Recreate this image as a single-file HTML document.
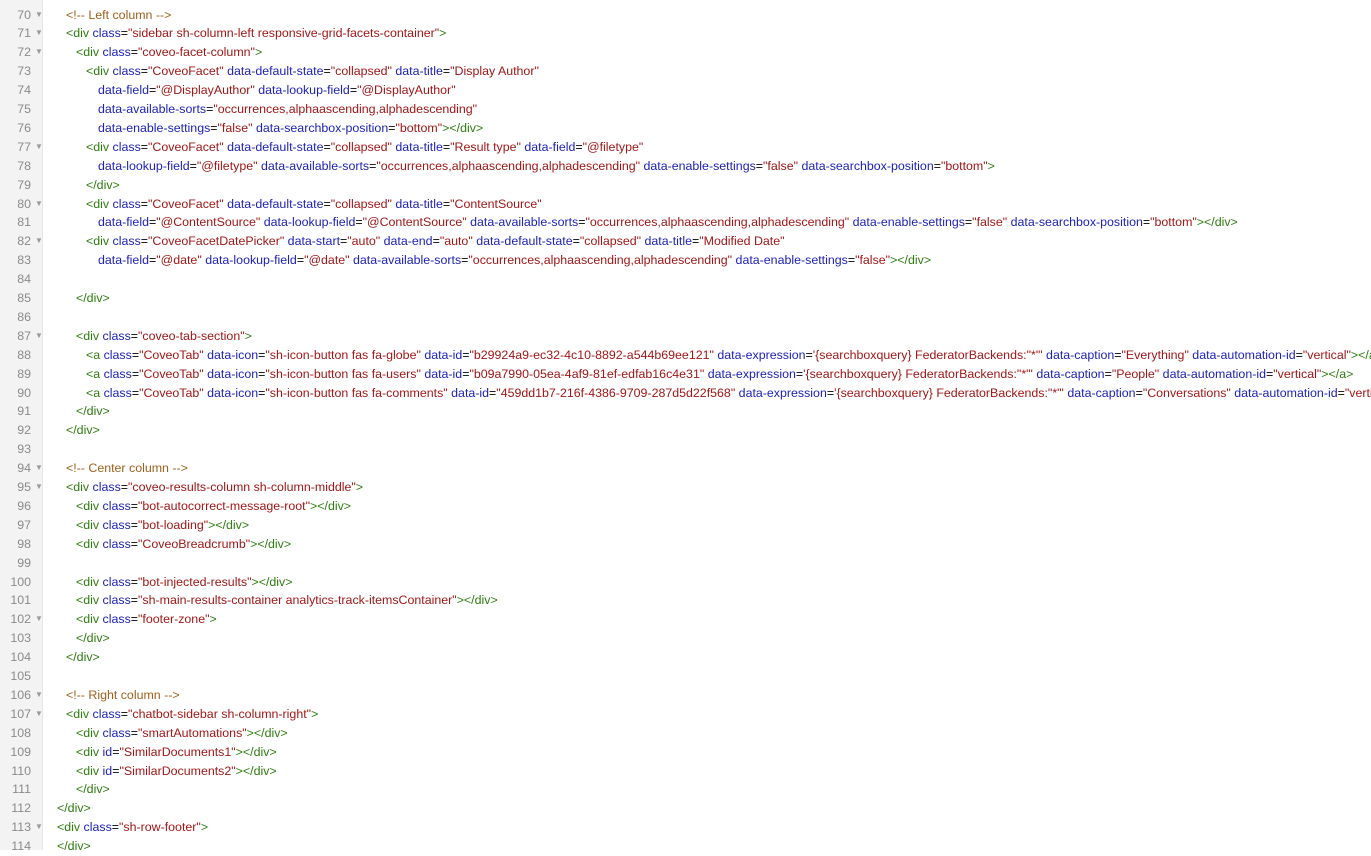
<!DOCTYPE html>
<html><head><meta charset="utf-8"><style>
html,body{margin:0;padding:0;width:1371px;height:850px;overflow:hidden;background:#fff;font-family:"Liberation Sans",sans-serif;}
#g{position:absolute;left:0;top:0;width:42px;height:850px;background:#f3f3f3;border-right:1px solid #e6e6e6;}
.l{position:absolute;left:0;height:18.9px;line-height:18.9px;font-size:12.4px;white-space:pre;color:#000;width:1371px;}
.n{position:absolute;left:0;width:31px;text-align:right;color:#8a8a8a;font-size:12.4px;}
.f{position:absolute;left:35px;color:#999;font-size:8px;}
.x{position:absolute;}
.t{color:#2f7d10}.a{color:#1e22b8}.s{color:#a11717}.c{color:#a0601c}
.L0{left:57px}.L1{left:66px}.L2{left:76px}.L3{left:86px}.C{left:98px}
</style></head><body>
<div id="g"></div>
<div class="l" style="top:-13.4px"><span class="n">69</span></div>
<div class="l" style="top:5.5px"><span class="n">70</span><span class="f">▼</span><span class="x L1 c">&lt;!-- Left column --&gt;</span></div>
<div class="l" style="top:24.4px"><span class="n">71</span><span class="f">▼</span><span class="x L1"><span class="t">&lt;div</span> <span class="a">class</span>=<span class="s">"sidebar sh-column-left responsive-grid-facets-container"</span><span class="t">&gt;</span></span></div>
<div class="l" style="top:43.3px"><span class="n">72</span><span class="f">▼</span><span class="x L2"><span class="t">&lt;div</span> <span class="a">class</span>=<span class="s">"coveo-facet-column"</span><span class="t">&gt;</span></span></div>
<div class="l" style="top:62.2px"><span class="n">73</span><span class="x L3"><span class="t">&lt;div</span> <span class="a">class</span>=<span class="s">"CoveoFacet"</span> <span class="a">data-default-state</span>=<span class="s">"collapsed"</span> <span class="a">data-title</span>=<span class="s">"Display Author"</span></span></div>
<div class="l" style="top:81.1px"><span class="n">74</span><span class="x C"><span class="a">data-field</span>=<span class="s">"@DisplayAuthor"</span> <span class="a">data-lookup-field</span>=<span class="s">"@DisplayAuthor"</span></span></div>
<div class="l" style="top:100px"><span class="n">75</span><span class="x C"><span class="a">data-available-sorts</span>=<span class="s">"occurrences,alphaascending,alphadescending"</span></span></div>
<div class="l" style="top:118.9px"><span class="n">76</span><span class="x C"><span class="a">data-enable-settings</span>=<span class="s">"false"</span> <span class="a">data-searchbox-position</span>=<span class="s">"bottom"</span><span class="t">&gt;&lt;/div&gt;</span></span></div>
<div class="l" style="top:137.8px"><span class="n">77</span><span class="f">▼</span><span class="x L3"><span class="t">&lt;div</span> <span class="a">class</span>=<span class="s">"CoveoFacet"</span> <span class="a">data-default-state</span>=<span class="s">"collapsed"</span> <span class="a">data-title</span>=<span class="s">"Result type"</span> <span class="a">data-field</span>=<span class="s">"@filetype"</span></span></div>
<div class="l" style="top:156.7px"><span class="n">78</span><span class="x C"><span class="a">data-lookup-field</span>=<span class="s">"@filetype"</span> <span class="a">data-available-sorts</span>=<span class="s">"occurrences,alphaascending,alphadescending"</span> <span class="a">data-enable-settings</span>=<span class="s">"false"</span> <span class="a">data-searchbox-position</span>=<span class="s">"bottom"</span><span class="t">&gt;</span></span></div>
<div class="l" style="top:175.6px"><span class="n">79</span><span class="x L3 t">&lt;/div&gt;</span></div>
<div class="l" style="top:194.5px"><span class="n">80</span><span class="f">▼</span><span class="x L3"><span class="t">&lt;div</span> <span class="a">class</span>=<span class="s">"CoveoFacet"</span> <span class="a">data-default-state</span>=<span class="s">"collapsed"</span> <span class="a">data-title</span>=<span class="s">"ContentSource"</span></span></div>
<div class="l" style="top:213.4px"><span class="n">81</span><span class="x C"><span class="a">data-field</span>=<span class="s">"@ContentSource"</span> <span class="a">data-lookup-field</span>=<span class="s">"@ContentSource"</span> <span class="a">data-available-sorts</span>=<span class="s">"occurrences,alphaascending,alphadescending"</span> <span class="a">data-enable-settings</span>=<span class="s">"false"</span> <span class="a">data-searchbox-position</span>=<span class="s">"bottom"</span><span class="t">&gt;&lt;/div&gt;</span></span></div>
<div class="l" style="top:232.3px"><span class="n">82</span><span class="f">▼</span><span class="x L3"><span class="t">&lt;div</span> <span class="a">class</span>=<span class="s">"CoveoFacetDatePicker"</span> <span class="a">data-start</span>=<span class="s">"auto"</span> <span class="a">data-end</span>=<span class="s">"auto"</span> <span class="a">data-default-state</span>=<span class="s">"collapsed"</span> <span class="a">data-title</span>=<span class="s">"Modified Date"</span></span></div>
<div class="l" style="top:251.2px"><span class="n">83</span><span class="x C"><span class="a">data-field</span>=<span class="s">"@date"</span> <span class="a">data-lookup-field</span>=<span class="s">"@date"</span> <span class="a">data-available-sorts</span>=<span class="s">"occurrences,alphaascending,alphadescending"</span> <span class="a">data-enable-settings</span>=<span class="s">"false"</span><span class="t">&gt;&lt;/div&gt;</span></span></div>
<div class="l" style="top:270.1px"><span class="n">84</span></div>
<div class="l" style="top:289px"><span class="n">85</span><span class="x L2 t">&lt;/div&gt;</span></div>
<div class="l" style="top:307.9px"><span class="n">86</span></div>
<div class="l" style="top:326.8px"><span class="n">87</span><span class="f">▼</span><span class="x L2"><span class="t">&lt;div</span> <span class="a">class</span>=<span class="s">"coveo-tab-section"</span><span class="t">&gt;</span></span></div>
<div class="l" style="top:345.7px"><span class="n">88</span><span class="x L3"><span class="t">&lt;a</span> <span class="a">class</span>=<span class="s">"CoveoTab"</span> <span class="a">data-icon</span>=<span class="s">"sh-icon-button fas fa-globe"</span> <span class="a">data-id</span>=<span class="s">"b29924a9-ec32-4c10-8892-a544b69ee121"</span> <span class="a">data-expression</span>=<span class="s">'{searchboxquery} FederatorBackends:"*"'</span> <span class="a">data-caption</span>=<span class="s">"Everything"</span> <span class="a">data-automation-id</span>=<span class="s">"vertical"</span><span class="t">&gt;&lt;/a&gt;</span></span></div>
<div class="l" style="top:364.6px"><span class="n">89</span><span class="x L3"><span class="t">&lt;a</span> <span class="a">class</span>=<span class="s">"CoveoTab"</span> <span class="a">data-icon</span>=<span class="s">"sh-icon-button fas fa-users"</span> <span class="a">data-id</span>=<span class="s">"b09a7990-05ea-4af9-81ef-edfab16c4e31"</span> <span class="a">data-expression</span>=<span class="s">'{searchboxquery} FederatorBackends:"*"'</span> <span class="a">data-caption</span>=<span class="s">"People"</span> <span class="a">data-automation-id</span>=<span class="s">"vertical"</span><span class="t">&gt;&lt;/a&gt;</span></span></div>
<div class="l" style="top:383.5px"><span class="n">90</span><span class="x L3"><span class="t">&lt;a</span> <span class="a">class</span>=<span class="s">"CoveoTab"</span> <span class="a">data-icon</span>=<span class="s">"sh-icon-button fas fa-comments"</span> <span class="a">data-id</span>=<span class="s">"459dd1b7-216f-4386-9709-287d5d22f568"</span> <span class="a">data-expression</span>=<span class="s">'{searchboxquery} FederatorBackends:"*"'</span> <span class="a">data-caption</span>=<span class="s">"Conversations"</span> <span class="a">data-automation-id</span>=<span class="s">"vertical"</span><span class="t">&gt;&lt;/a&gt;</span></span></div>
<div class="l" style="top:402.4px"><span class="n">91</span><span class="x L2 t">&lt;/div&gt;</span></div>
<div class="l" style="top:421.3px"><span class="n">92</span><span class="x L1 t">&lt;/div&gt;</span></div>
<div class="l" style="top:440.2px"><span class="n">93</span></div>
<div class="l" style="top:459.1px"><span class="n">94</span><span class="f">▼</span><span class="x L1 c">&lt;!-- Center column --&gt;</span></div>
<div class="l" style="top:478px"><span class="n">95</span><span class="f">▼</span><span class="x L1"><span class="t">&lt;div</span> <span class="a">class</span>=<span class="s">"coveo-results-column sh-column-middle"</span><span class="t">&gt;</span></span></div>
<div class="l" style="top:496.9px"><span class="n">96</span><span class="x L2"><span class="t">&lt;div</span> <span class="a">class</span>=<span class="s">"bot-autocorrect-message-root"</span><span class="t">&gt;&lt;/div&gt;</span></span></div>
<div class="l" style="top:515.8px"><span class="n">97</span><span class="x L2"><span class="t">&lt;div</span> <span class="a">class</span>=<span class="s">"bot-loading"</span><span class="t">&gt;&lt;/div&gt;</span></span></div>
<div class="l" style="top:534.7px"><span class="n">98</span><span class="x L2"><span class="t">&lt;div</span> <span class="a">class</span>=<span class="s">"CoveoBreadcrumb"</span><span class="t">&gt;&lt;/div&gt;</span></span></div>
<div class="l" style="top:553.6px"><span class="n">99</span></div>
<div class="l" style="top:572.5px"><span class="n">100</span><span class="x L2"><span class="t">&lt;div</span> <span class="a">class</span>=<span class="s">"bot-injected-results"</span><span class="t">&gt;&lt;/div&gt;</span></span></div>
<div class="l" style="top:591.4px"><span class="n">101</span><span class="x L2"><span class="t">&lt;div</span> <span class="a">class</span>=<span class="s">"sh-main-results-container analytics-track-itemsContainer"</span><span class="t">&gt;&lt;/div&gt;</span></span></div>
<div class="l" style="top:610.3px"><span class="n">102</span><span class="f">▼</span><span class="x L2"><span class="t">&lt;div</span> <span class="a">class</span>=<span class="s">"footer-zone"</span><span class="t">&gt;</span></span></div>
<div class="l" style="top:629.2px"><span class="n">103</span><span class="x L2 t">&lt;/div&gt;</span></div>
<div class="l" style="top:648.1px"><span class="n">104</span><span class="x L1 t">&lt;/div&gt;</span></div>
<div class="l" style="top:667px"><span class="n">105</span></div>
<div class="l" style="top:685.9px"><span class="n">106</span><span class="f">▼</span><span class="x L1 c">&lt;!-- Right column --&gt;</span></div>
<div class="l" style="top:704.8px"><span class="n">107</span><span class="f">▼</span><span class="x L1"><span class="t">&lt;div</span> <span class="a">class</span>=<span class="s">"chatbot-sidebar sh-column-right"</span><span class="t">&gt;</span></span></div>
<div class="l" style="top:723.7px"><span class="n">108</span><span class="x L2"><span class="t">&lt;div</span> <span class="a">class</span>=<span class="s">"smartAutomations"</span><span class="t">&gt;&lt;/div&gt;</span></span></div>
<div class="l" style="top:742.6px"><span class="n">109</span><span class="x L2"><span class="t">&lt;div</span> <span class="a">id</span>=<span class="s">"SimilarDocuments1"</span><span class="t">&gt;&lt;/div&gt;</span></span></div>
<div class="l" style="top:761.5px"><span class="n">110</span><span class="x L2"><span class="t">&lt;div</span> <span class="a">id</span>=<span class="s">"SimilarDocuments2"</span><span class="t">&gt;&lt;/div&gt;</span></span></div>
<div class="l" style="top:780.4px"><span class="n">111</span><span class="x L2 t">&lt;/div&gt;</span></div>
<div class="l" style="top:799.3px"><span class="n">112</span><span class="x L0 t">&lt;/div&gt;</span></div>
<div class="l" style="top:818.2px"><span class="n">113</span><span class="f">▼</span><span class="x L0"><span class="t">&lt;div</span> <span class="a">class</span>=<span class="s">"sh-row-footer"</span><span class="t">&gt;</span></span></div>
<div class="l" style="top:837.1px"><span class="n">114</span><span class="x L0 t">&lt;/div&gt;</span></div>
</body></html>
